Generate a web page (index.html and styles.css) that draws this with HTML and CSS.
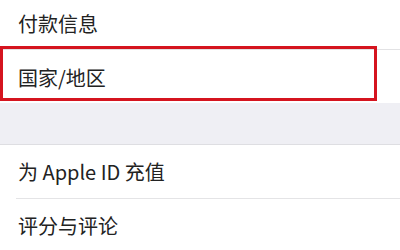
FILE: index.html
```html
<!DOCTYPE html>
<html lang="zh-CN">
<head>
<meta charset="utf-8">
<title>设置</title>
<link rel="stylesheet" href="styles.css">
</head>
<body>
<div class="list">
  <div class="row row-first"><span class="label">付款信息</span></div>
  <div class="row row-highlight">
    <span class="label">国家/地区</span>
    <div class="highlight-box"></div>
  </div>
  <div class="gap"></div>
  <div class="row row-divided"><span class="label">为 Apple ID 充值</span></div>
  <div class="row"><span class="label">评分与评论</span></div>
</div>
</body>
</html>
```
FILE: styles.css
```css
html, body {
  margin: 0;
  padding: 0;
  background: #ffffff;
}
body {
  width: 400px;
  height: 250px;
  overflow: hidden;
  font-family: "Noto Sans CJK SC", "Noto Sans", sans-serif;
  color: #222222;
}
.list {
  display: flex;
  flex-direction: column;
}
.row {
  position: relative;
  height: 54px;
  display: flex;
  align-items: center;
  padding-left: 18px;
  font-size: 20px;
  background: #ffffff;
}
.row-first {
  height: 50px;
  box-sizing: border-box;
  padding-bottom: 2px;
  border-bottom: 1px solid #e2e2e4;
}
.row-highlight {
  height: 53px;
  padding-top: 2px;
  box-sizing: border-box;
}
.highlight-box {
  position: absolute;
  left: 0;
  top: -4px;
  width: 377px;
  height: 55px;
  box-sizing: border-box;
  border: 3px solid #d5141f;
}
.gap {
  height: 42px;
  box-sizing: border-box;
  background: #efeff4;
  border-bottom: 1px solid #dedee2;
}
.row-divided::after {
  content: "";
  position: absolute;
  left: 16px;
  right: 0;
  bottom: 0;
  height: 1px;
  background: #e4e4e6;
}
.label {
  line-height: 1;
  white-space: nowrap;
}
```
